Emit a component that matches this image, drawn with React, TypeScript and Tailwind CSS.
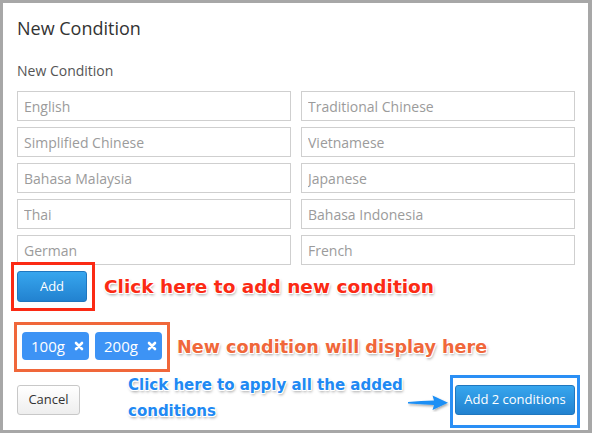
import React from "react";

const inputs = [
  "English",
  "Traditional Chinese",
  "Simplified Chinese",
  "Vietnamese",
  "Bahasa Malaysia",
  "Japanese",
  "Thai",
  "Bahasa Indonesia",
  "German",
  "French",
];

const note =
  "font-['DejaVu_Sans',Verdana,sans-serif] font-bold [text-shadow:-1px_-1px_0_#fff,1px_-1px_0_#fff,-1px_1px_0_#fff,1px_1px_0_#fff,0_-1px_0_#fff,0_1px_0_#fff,1px_2px_3px_rgba(0,0,0,0.4)]";

function Chip({ label }: { label: string }) {
  return (
    <div className="flex h-[28px] w-[67px] items-center rounded-[4px] bg-[#3d93f5] pl-[9px] text-[15px] text-white">
      <span>{label}</span>
      <svg className="ml-[9px]" width="10" height="10" viewBox="0 0 10 10">
        <path d="M2 2 8 8M8 2 2 8" stroke="#fff" strokeWidth="2.6" strokeLinecap="round" />
      </svg>
    </div>
  );
}

export default function App() {
  return (
    <div className="box-border h-[433px] w-[592px] overflow-hidden border-[#a7a7a7] border-t-[3px] border-l-[3px] border-r-[4px] border-b-[3px] bg-white pl-[14px] pr-[13px] font-['Open_Sans',sans-serif] text-[#333]">
      <h1 className="pt-[13px] text-[18px] leading-[24px]">New Condition</h1>
      <p className="mt-[22px] text-[14px] leading-[18px] text-[#555]">New Condition</p>

      <div className="mt-[11px] grid grid-cols-2 gap-x-[10px] gap-y-[6px]">
        {inputs.map((p) => (
          <input
            key={p}
            readOnly
            placeholder={p}
            className="h-[30px] w-full border border-[#cfcfcf] bg-white px-[6px] text-[14px] text-[#333] outline-none placeholder:text-[#9b9b9b]"
          />
        ))}
      </div>

      <div className="relative -mt-[3px] flex items-center">
        <div className="-ml-[6px] box-border h-[49px] w-[84px] border-[3px] border-[#fb2a14] pl-[3px] pt-[6px]">
          <button className="h-[31px] w-[70px] rounded-[3px] border border-[#1f77bf] bg-linear-to-b from-[#37a6ee] to-[#2282d0] text-[13px] text-white">
            Add
          </button>
        </div>
        <span className={`ml-[9px] text-[18.5px] leading-[24px] text-[#fb2a14] ${note}`}>
          Click here to add new condition
        </span>
      </div>

      <div className="mt-[11px] flex items-center">
        <div className="-ml-[3px] box-border flex h-[50px] w-[156px] gap-[6px] border-[3px] border-[#f0673a] pl-[5px] pt-[7px]">
          <Chip label="100g" />
          <Chip label="200g" />
        </div>
        <span className={`ml-[7px] text-[17.6px] leading-[24px] text-[#f0673a] ${note}`}>
          New condition will display here
        </span>
      </div>

      <div className="mt-[3px] flex items-start">
        <button className="mt-[10px] h-[30px] w-[63px] shrink-0 rounded-[3px] border border-[#c8c8c8] bg-linear-to-b from-white to-[#eeeeee] text-[13px] text-[#333]">
          Cancel
        </button>
        <div className={`-mt-[3px] ml-[48px] w-[279px] shrink-0 whitespace-nowrap text-[15px] leading-[26px] text-[#2189f3] ${note}`}>
          Click here to apply all the added
          <br />
          conditions
        </div>
        <svg className="mt-[19px] shrink-0" width="43" height="18" viewBox="0 0 43 18">
          <defs>
            <filter id="sh" x="-20%" y="-40%" width="140%" height="180%">
              <feDropShadow dx="1" dy="1.5" stdDeviation="1" floodColor="#000" floodOpacity="0.35" />
            </filter>
          </defs>
          <path d="M1 8 Q14 6.8 27 6.6 L25.5 1.5 L41 8.8 L25.5 16 L27 11 Q14 10.6 1 9.6Z" fill="#1e8ff5" filter="url(#sh)" />
        </svg>
        <div className="box-border h-[53px] w-[130px] shrink-0 border-[3px] border-[#2a8ff5] pl-[2px] pt-[7px]">
          <button className="h-[30px] w-[120px] rounded-[3px] border border-[#1f77bf] bg-linear-to-b from-[#37a6ee] to-[#2282d0] text-[13px] text-white">
            Add 2 conditions
          </button>
        </div>
      </div>
    </div>
  );
}
